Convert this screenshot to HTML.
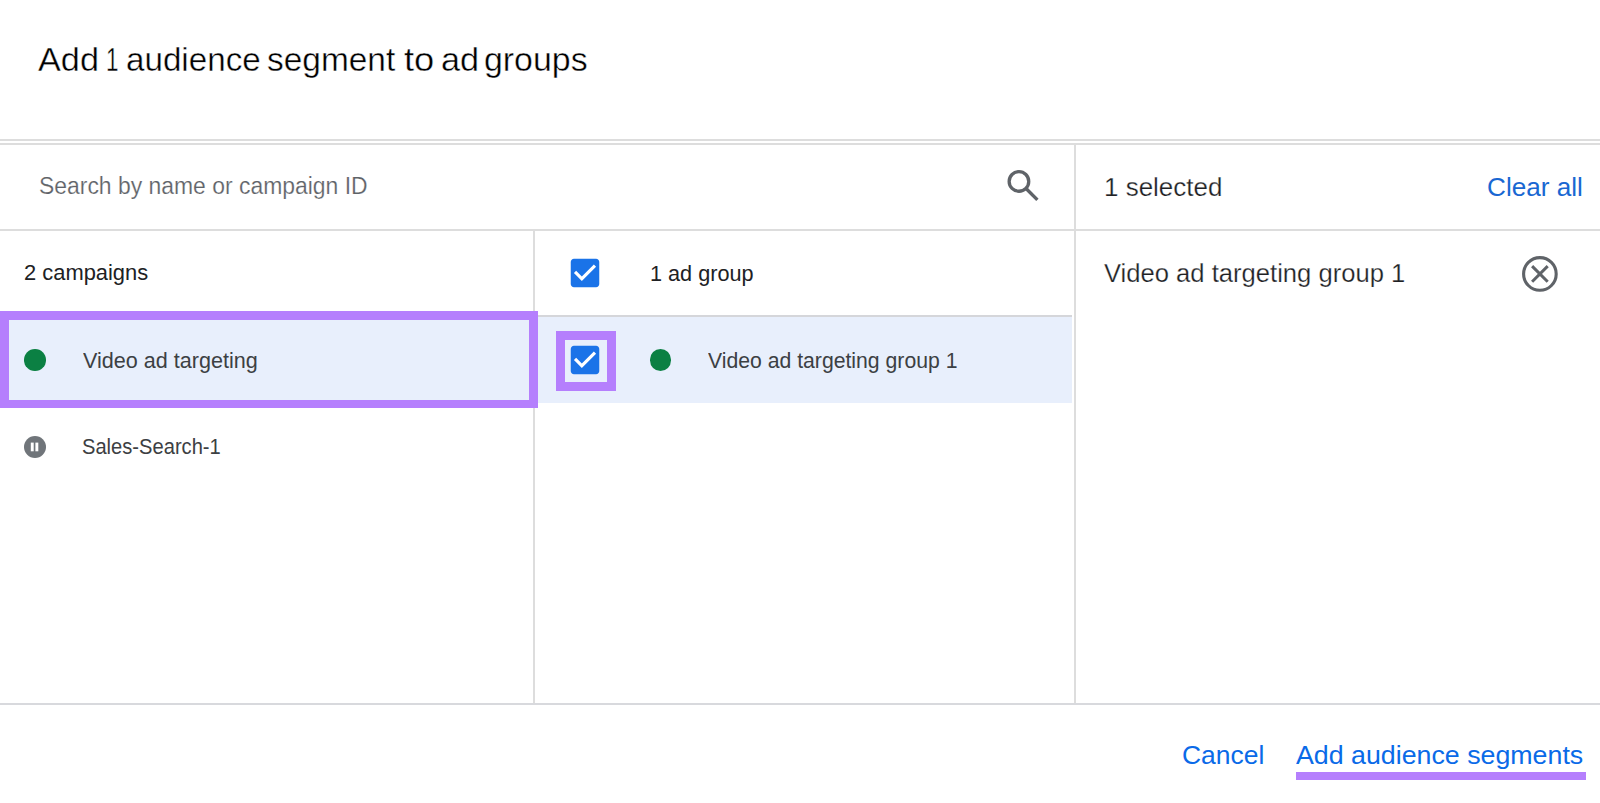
<!DOCTYPE html>
<html>
<head>
<meta charset="utf-8">
<style>
html,body{margin:0;padding:0;background:#fff;}
body{width:1600px;height:803px;position:relative;overflow:hidden;font-family:"Liberation Sans",sans-serif;}
.a{position:absolute;}
.t{position:absolute;white-space:nowrap;line-height:1;transform-origin:0 0;}
.hl{position:absolute;background:#dddddd;}
</style>
</head>
<body>
<!-- title -->
<div class="t" style="left:38.28px;top:42.67px;font-size:33.33px;color:#000;transform:scaleX(1.0276);-webkit-text-stroke:0.4px #fff;">Add</div><div class="t" style="left:105.56px;top:42.67px;font-size:33.33px;color:#000;transform:scaleX(0.6714);-webkit-text-stroke:0.4px #fff;">1</div><div class="t" style="left:125.75px;top:42.67px;font-size:33.33px;color:#000;transform:scaleX(0.9957);-webkit-text-stroke:0.4px #fff;">audience</div><div class="t" style="left:267.47px;top:42.67px;font-size:33.33px;color:#000;transform:scaleX(1.0034);-webkit-text-stroke:0.4px #fff;">segment</div><div class="t" style="left:404.30px;top:42.67px;font-size:33.33px;color:#000;transform:scaleX(1.0899);-webkit-text-stroke:0.4px #fff;">to</div><div class="t" style="left:440.75px;top:42.67px;font-size:33.33px;color:#000;transform:scaleX(1.0274);-webkit-text-stroke:0.4px #fff;">ad</div><div class="t" style="left:484.22px;top:42.67px;font-size:33.33px;color:#000;transform:scaleX(1.0164);-webkit-text-stroke:0.4px #fff;">groups</div>

<!-- top double lines -->
<div class="hl" style="left:0;top:139px;width:1600px;height:2px;"></div>
<div class="hl" style="left:0;top:143px;width:1600px;height:2px;"></div>

<!-- search -->
<div class="t" style="left:38.54px;top:174.00px;font-size:24.64px;color:#5f6368;transform:scaleX(0.9304);-webkit-text-stroke:0.2px #fff;">Search by name or campaign ID</div>
<svg class="a" style="left:1000px;top:160px;" width="50" height="50" viewBox="1000 160 50 50"><circle cx="1018.95" cy="181.45" r="9.8" fill="none" stroke="#5f6368" stroke-width="3.3"/><path d="M1025.8 188.3L1037.4 199.9" stroke="#5f6368" stroke-width="3.4"/></svg>

<!-- selected header -->
<div class="t" style="left:1103.84px;top:174.83px;font-size:25.80px;color:#202124;transform:scaleX(1.0062);-webkit-text-stroke:0.25px #fff;">1 selected</div>
<div class="t" style="left:1486.70px;top:173.70px;font-size:26.38px;color:#1967d2;transform:scaleX(0.9913);">Clear all</div>

<!-- lines -->
<div class="hl" style="left:0;top:229px;width:1600px;height:2px;"></div>
<div class="hl" style="left:533px;top:231px;width:2px;height:472px;"></div>
<div class="hl" style="left:1074px;top:145px;width:2px;height:558px;"></div>
<div class="hl" style="left:0;top:703px;width:1600px;height:2px;background:#d8d9dd;"></div>

<!-- column headers -->
<div class="t" style="left:24.30px;top:262.41px;font-size:21.16px;color:#202124;transform:scaleX(1.0352);">2 campaigns</div>
<svg class="a" style="left:566px;top:254px;" width="38" height="38" viewBox="0 0 24 24"><path fill="#1a73e8" d="M19 3H5c-1.11 0-2 .9-2 2v14c0 1.1.89 2 2 2h14c1.11 0 2-.9 2-2V5c0-1.1-.89-2-2-2z"/><path fill="#fff" d="M10 17l-5-5 1.41-1.41L10 14.17l7.59-7.59L19 8l-9 9z"/></svg>
<div class="t" style="left:649.76px;top:262.72px;font-size:21.74px;color:#202124;transform:scaleX(0.9959);">1 ad group</div>

<!-- col2 row separator + highlight -->
<div class="hl" style="left:538px;top:315px;width:534px;height:2px;background:#d5d6da;"></div>
<div class="a" style="left:538px;top:317px;width:534px;height:86px;background:#e8effc;"></div>
<!-- col1 highlight -->
<div class="a" style="left:0;top:311px;width:538px;height:97px;background:#e8effc;"></div>
<!-- purple big box -->
<div class="a" style="left:0;top:311px;width:538px;height:97px;box-sizing:border-box;border:9px solid #b57ffd;border-bottom-width:8px;"></div>

<!-- row 1 col1 -->
<div class="a" style="left:24.25px;top:349.15px;width:21.7px;height:21.7px;border-radius:50%;background:#0b8043;"></div>
<div class="t" style="left:82.70px;top:350.03px;font-size:22.32px;color:#3c4043;transform:scaleX(0.9671);">Video ad targeting</div>

<!-- row 2 col1 -->
<svg class="a" style="left:24.2px;top:435.9px;" width="22" height="22" viewBox="0 0 22 22"><circle cx="11" cy="11" r="11" fill="#70757a"/><rect x="6.8" y="6.6" width="2.9" height="8.7" fill="#fff"/><rect x="11.4" y="6.6" width="2.9" height="8.7" fill="#fff"/></svg>
<div class="t" style="left:81.54px;top:436.28px;font-size:21.74px;color:#3c4043;transform:scaleX(0.9262);">Sales-Search-1</div>

<!-- row 1 col2 -->
<div class="a" style="left:556px;top:331px;width:60px;height:60px;box-sizing:border-box;border:9px solid #b57ffd;"></div>
<svg class="a" style="left:566px;top:341px;" width="38" height="38" viewBox="0 0 24 24"><path fill="#1a73e8" d="M19 3H5c-1.11 0-2 .9-2 2v14c0 1.1.89 2 2 2h14c1.11 0 2-.9 2-2V5c0-1.1-.89-2-2-2z"/><path fill="#fff" d="M10 17l-5-5 1.41-1.41L10 14.17l7.59-7.59L19 8l-9 9z"/></svg>
<div class="a" style="left:649.75px;top:349.15px;width:21.7px;height:21.7px;border-radius:50%;background:#0b8043;"></div>
<div class="t" style="left:708.08px;top:350.03px;font-size:22.32px;color:#3c4043;transform:scaleX(0.9499);">Video ad targeting group 1</div>

<!-- right panel item -->
<div class="t" style="left:1103.80px;top:261.38px;font-size:25.51px;color:#202124;transform:scaleX(1.0039);-webkit-text-stroke:0.25px #fff;">Video ad targeting group 1</div>
<svg class="a" style="left:1520px;top:254px;" width="40" height="40" viewBox="0 0 40 40"><circle cx="19.9" cy="19.95" r="16.3" fill="none" stroke="#5f6368" stroke-width="3.1"/><path d="M12.1 12.1L27.7 27.7M27.7 12.1L12.1 27.7" stroke="#5f6368" stroke-width="3"/></svg>

<!-- footer -->
<div class="t" style="left:1181.50px;top:741.89px;font-size:26.09px;color:#0a6ae8;transform:scaleX(1.0136);">Cancel</div>
<div class="t" style="left:1295.54px;top:743.38px;font-size:25.51px;color:#0a6ae8;transform:scaleX(1.0497);">Add audience segments</div>
<div class="a" style="left:1296px;top:772px;width:290px;height:8px;background:#b57ffd;"></div>
</body>
</html>
